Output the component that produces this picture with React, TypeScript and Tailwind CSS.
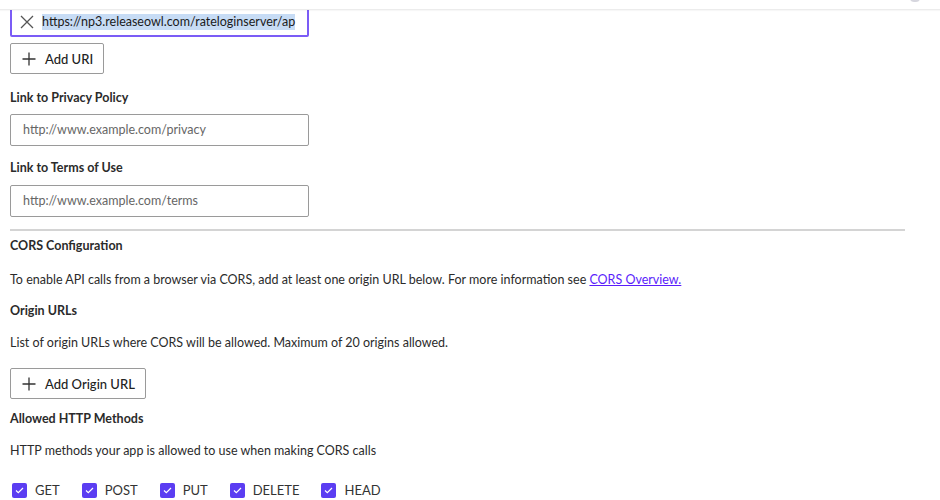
import React from "react";

const METHODS = ["GET", "POST", "PUT", "DELETE", "HEAD"];

function PlusIcon() {
  return (
    <svg width="14" height="14" viewBox="0 0 14 14" className="text-[#333]">
      <path d="M7 0.5v13M0.5 7h13" stroke="currentColor" strokeWidth="1.3" />
    </svg>
  );
}

function OutlineButton({ label }: { label: string }) {
  return (
    <button
      type="button"
      className="flex h-[31px] items-center gap-[9px] rounded-[2px] border border-[#9a9a9a] bg-white pl-[11px] pr-[10px] text-[13px] leading-[16px] font-medium text-[#222]"
    >
      <PlusIcon />
      <span>{label}</span>
    </button>
  );
}

function TextField({ placeholder }: { placeholder: string }) {
  return (
    <div className="flex h-[32px] w-[299px] items-center rounded-[2px] border border-[#9a9a9a] px-3 text-[12.5px] leading-[16px] text-[#666]">
      {placeholder}
    </div>
  );
}

export default function App() {
  return (
    <div
      className="h-[500px] w-[940px] overflow-hidden bg-white text-[12.5px] leading-[16px] text-[#2b2b2b]"
      style={{ fontFamily: "Lato, 'Open Sans', sans-serif" }}
    >
      <div className="relative z-10 flex h-[10px] justify-end border-b border-[#ececec] bg-white pr-[20px] shadow-[0_1px_1px_rgba(0,0,0,0.03)]">
        <div className="-mt-[6px] h-[8px] w-[10px] rounded-full bg-[#d6d6de]" />
      </div>

      <div className="-mt-[7px] flex flex-col pl-[10px]">
        {/* redirect uri field, focused */}
        <div className="flex h-[34px] w-[299px] items-center rounded-[2px] border-2 border-[#7b5cf6] pl-[8px] text-[12.5px]">
          <svg width="14" height="14" viewBox="0 0 14 14" className="mt-[4px] text-[#555]">
            <path d="M1 1l12 12M13 1L1 13" stroke="currentColor" strokeWidth="1.3" />
          </svg>
          <span className="mt-[4px] ml-[8px] bg-[#c7dcf5] leading-[16px] text-[#1a1a1a]">
            https://np3.releaseowl.com/rateloginserver/ap
          </span>
        </div>

        <div className="mt-[6px]">
          <OutlineButton label="Add URI" />
        </div>

        <div className="mt-[16px] font-bold">Link to Privacy Policy</div>
        <div className="mt-[8px]">
          <TextField placeholder="http://www.example.com/privacy" />
        </div>

        <div className="mt-[14px] font-bold">Link to Terms of Use</div>
        <div className="mt-[9px]">
          <TextField placeholder="http://www.example.com/terms" />
        </div>

        <div className="mt-[12px] h-[2px] w-[895px] bg-[#d4d4d4]" />

        <div className="mt-[7px] font-bold">CORS Configuration</div>
        <p className="mt-[18px]">
          To enable API calls from a browser via CORS, add at least one origin URL below. For more information see{" "}
          <a href="#" className="text-[#5b1dfb] underline">
            CORS Overview.
          </a>
        </p>

        <div className="mt-[15px] font-bold">Origin URLs</div>
        <p className="mt-[16px]">
          List of origin URLs where CORS will be allowed. Maximum of 20 origins allowed.
        </p>

        <div className="mt-[17px]">
          <OutlineButton label="Add Origin URL" />
        </div>

        <div className="mt-[12px] font-bold">Allowed HTTP Methods</div>
        <p className="mt-[16px]">HTTP methods your app is allowed to use when making CORS calls</p>

        <div className="mt-[23px] flex items-center gap-[22px] pl-[2px]">
          {METHODS.map((m) => (
            <label key={m} className="flex items-center gap-[8px] text-[13px] text-[#333]">
              <span className="flex h-[15px] w-[15px] items-center justify-center rounded-[2px] bg-[#5b3df2]">
                <svg width="9" height="7" viewBox="0 0 9 7">
                  <path d="M1 3.5l2.3 2.2L8 1" stroke="white" strokeWidth="1.2" fill="none" />
                </svg>
              </span>
              {m}
            </label>
          ))}
        </div>
      </div>
    </div>
  );
}
